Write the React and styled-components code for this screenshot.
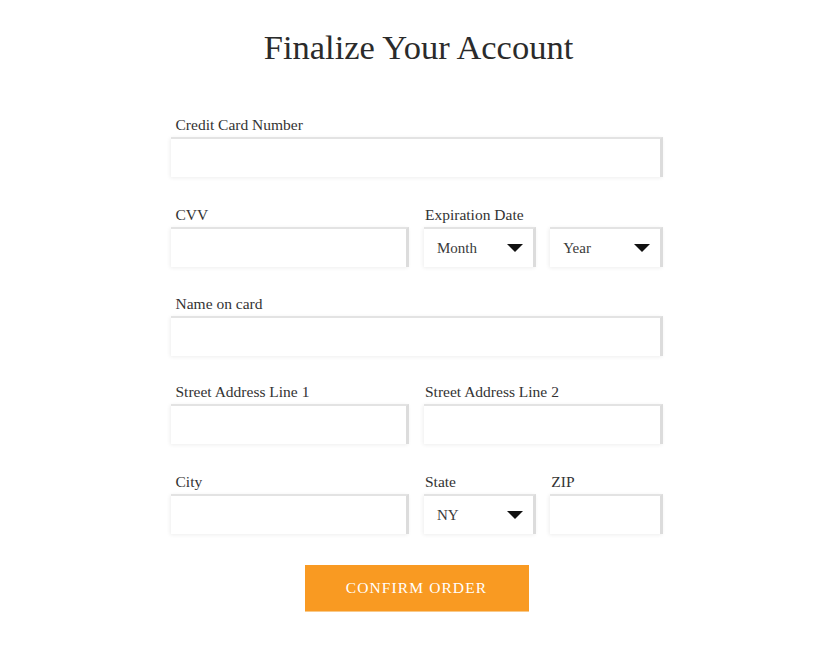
import React from "react";
import styled, { createGlobalStyle } from "styled-components";

const GlobalStyle = createGlobalStyle`
  * {
    box-sizing: border-box;
  }
  body {
    margin: 0;
    background: #ffffff;
    font-family: "Liberation Serif", "DejaVu Serif", serif;
    color: #333333;
  }
`;

const Page = styled.div`
  width: 821px;
  min-height: 648px;
  padding: 28px 0 0 12px;
  display: flex;
  flex-direction: column;
  align-items: center;
`;

const Title = styled.h1`
  margin: 0 0 50px 4px;
  font-weight: 400;
  font-size: 34.5px;
  line-height: 38px;
  color: #2b2b2b;
`;

const Form = styled.form`
  width: 492px;
  display: flex;
  flex-direction: column;
`;

const Row = styled.div`
  display: flex;
  gap: ${(p) => p.gap || 15}px;
  margin-bottom: ${(p) => p.space ?? 28}px;
`;

const Col = styled.div`
  flex: 1 1 0;
  min-width: 0;
  display: flex;
  flex-direction: column;
`;

const Label = styled.label`
  display: block;
  height: 18px;
  margin: 0 0 3px ${(p) => p.indent ?? 5}px;
  font-size: 15.5px;
  line-height: 18px;
  color: #333333;
`;

const Field = styled.div`
  height: 40px;
  background: #ffffff;
  border-top: 2px solid #e3e3e3;
  border-right: 3px solid #dcdcdc;
  box-shadow: -1px 1px 4px rgba(0, 0, 0, 0.07);
  display: flex;
  align-items: center;
  justify-content: space-between;
  padding: 0 10px 0 13px;
  font-size: 15px;
  color: #3a3a3a;
`;

const Input = styled.input`
  width: 100%;
  height: 40px;
  background: #ffffff;
  border: none;
  border-top: 2px solid #e3e3e3;
  border-right: 3px solid #dcdcdc;
  box-shadow: -1px 1px 4px rgba(0, 0, 0, 0.07);
  outline: none;
  padding: 0 12px;
  font-family: inherit;
  font-size: 15px;
`;

const Caret = () => (
  <svg width="16" height="8" viewBox="0 0 16 8">
    <path d="M0 0 L16 0 L8 8 Z" fill="#111111" />
  </svg>
);

const Select = ({ value }) => (
  <Field>
    <span>{value}</span>
    <Caret />
  </Field>
);

const Actions = styled.div`
  display: flex;
  justify-content: center;
  margin-top: 3px;
`;

const Button = styled.button`
  width: 224px;
  height: 47px;
  border: none;
  border-bottom: 1px solid #f8c98a;
  background: #f99a22;
  color: #ffffff;
  font-family: inherit;
  font-size: 15.5px;
  letter-spacing: 1.1px;
  text-transform: uppercase;
  cursor: pointer;
`;

function App() {
  return (
    <>
      <GlobalStyle />
      <Page>
        <Title>Finalize Your Account</Title>
        <Form onSubmit={(e) => e.preventDefault()}>
          <Row space={29}>
            <Col>
              <Label>Credit Card Number</Label>
              <Input />
            </Col>
          </Row>
          <Row space={28}>
            <Col>
              <Label>CVV</Label>
              <Input />
            </Col>
            <Col>
              <Label indent={1}>Expiration Date</Label>
              <Row gap={14} space={0}>
                <Col>
                  <Select value="Month" />
                </Col>
                <Col>
                  <Select value="Year" />
                </Col>
              </Row>
            </Col>
          </Row>
          <Row space={27}>
            <Col>
              <Label>Name on card</Label>
              <Input />
            </Col>
          </Row>
          <Row space={29}>
            <Col>
              <Label>Street Address Line 1</Label>
              <Input />
            </Col>
            <Col>
              <Label indent={1}>Street Address Line 2</Label>
              <Input />
            </Col>
          </Row>
          <Row space={28}>
            <Col>
              <Label>City</Label>
              <Input />
            </Col>
            <Col>
              <Row gap={14} space={0}>
                <Col>
                  <Label indent={1}>State</Label>
                  <Select value="NY" />
                </Col>
                <Col>
                  <Label indent={1}>ZIP</Label>
                  <Input />
                </Col>
              </Row>
            </Col>
          </Row>
          <Actions>
            <Button type="submit">Confirm Order</Button>
          </Actions>
        </Form>
      </Page>
    </>
  );
}

export default App;
